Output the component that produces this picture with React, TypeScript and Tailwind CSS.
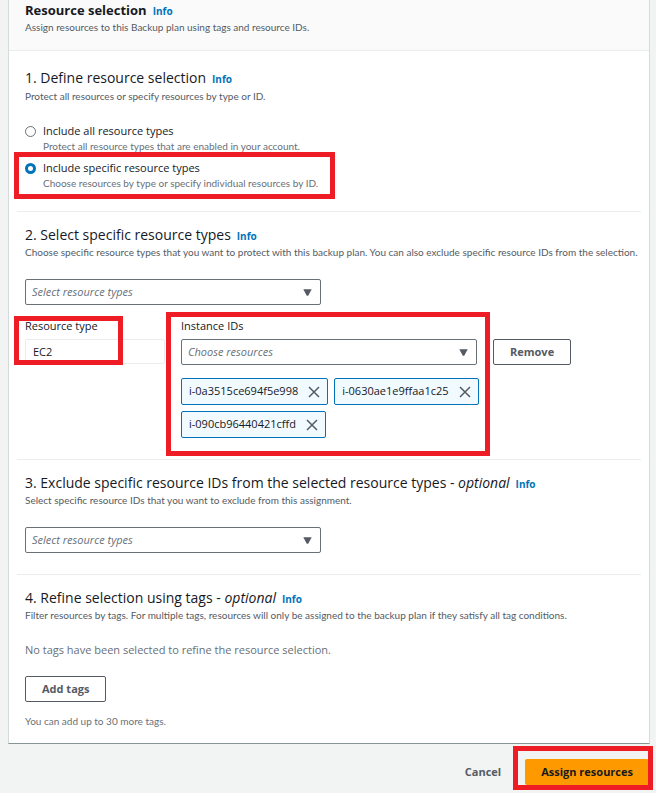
import { useState, type ReactNode } from "react";

function Info() {
  return (
    <a href="#info" className="ml-1.5 text-[10px] leading-none font-bold text-[#0073bb]">
      Info
    </a>
  );
}

function Highlight({ className }: { className: string }) {
  return <div aria-hidden="true" className={`pointer-events-none absolute z-10 border-5 border-[#ee1c24] ${className}`} />;
}

function SectionHeading({ children, optional }: { children: ReactNode; optional?: boolean }) {
  return (
    <h3 className="text-[14px] leading-5 whitespace-nowrap text-[#16191f]">
      {children}
      {optional && (
        <>
          {" - "}
          <em>optional</em>
        </>
      )}
      <Info />
    </h3>
  );
}

function Small({ children, className = "" }: { children: ReactNode; className?: string }) {
  return <p className={`font-['Lato','Open_Sans',sans-serif] text-[10px] leading-[14px] ${className}`}>{children}</p>;
}

function Dropdown({ id, label, placeholder }: { id: string; label?: string; placeholder: string }) {
  return (
    <div className="relative w-[296px]">
      <select
        id={id}
        aria-label={label}
        className="block h-[26px] w-full appearance-none rounded-xs border border-[#687078] bg-white pr-6 pl-1.5 text-[11px] text-[#687078] italic"
      >
        <option>{placeholder}</option>
      </select>
      <svg viewBox="0 0 9 7" className="pointer-events-none absolute top-[10px] right-[9px] h-[7px] w-[9px]" fill="#545b64">
        <path d="M0.3 0.3h8.4L5.2 6.7h-1.4z" />
      </svg>
    </div>
  );
}

function OutlineButton({ children }: { children: ReactNode }) {
  return (
    <button type="button" className="h-[26px] rounded-xs border border-[#545b64] bg-white px-4 text-[11px] font-bold text-[#545b64]">
      {children}
    </button>
  );
}

function Choice({ title, hint, checked, onChange }: { title: string; hint: string; checked: boolean; onChange: () => void }) {
  return (
    <label className="flex gap-[7px]">
      <input
        type="radio"
        name="selection"
        checked={checked}
        onChange={onChange}
        className="mt-[3px] size-[11px] shrink-0 appearance-none rounded-full border border-[#687078] bg-white checked:border-[3px] checked:border-[#0073bb]"
      />
      <span>
        <span className="block text-[11px] leading-4 text-[#16191f]">{title}</span>
        <span className="block font-['Lato','Open_Sans',sans-serif] text-[10px] leading-[14px] text-[#687078]">{hint}</span>
      </span>
    </label>
  );
}

function Token({ id, onRemove }: { id: string; onRemove: () => void }) {
  return (
    <li className="flex h-[27px] items-center gap-2.5 rounded-xs border border-[#0073bb] bg-[#f1faff] px-[7px] text-[11px] text-[#16191f]">
      {id}
      <button type="button" aria-label={`Remove ${id}`} onClick={onRemove}>
        <svg viewBox="0 0 12 12" className="size-3" fill="none" stroke="#545b64" strokeWidth="1.5">
          <path d="M1 1l10 10M11 1L1 11" />
        </svg>
      </button>
    </li>
  );
}

export default function App() {
  const [mode, setMode] = useState("specific");
  const [ids, setIds] = useState(["i-0a3515ce694f5e998", "i-0630ae1e9ffaa1c25", "i-090cb96440421cffd"]);

  return (
    <main className="min-h-screen bg-[#f2f3f3] pr-1.5 pb-2 pl-2 font-['Open_Sans','Noto_Sans',sans-serif] text-[#545b64]">
      <section className="border-x border-b border-[#d5dbdb] border-b-[#879596] bg-white">
        <header className="border-b border-[#eaeded] bg-[#fafafa] px-4 pb-4">
          <h2 className="text-[13px] leading-5 font-bold text-[#16191f]">
            Resource selection
            <Info />
          </h2>
          <Small>Assign resources to this Backup plan using tags and resource IDs.</Small>
        </header>

        <div className="px-2">
          <div className="border-b border-[#eaeded] pt-[17px] pb-[21px] pl-2">
            <SectionHeading>1. Define resource selection</SectionHeading>
            <Small className="mt-px">Protect all resources or specify resources by type or ID.</Small>
            <div className="mt-5 flex flex-col items-start gap-[7px]">
              <Choice
                title="Include all resource types"
                hint="Protect all resource types that are enabled in your account."
                checked={mode === "all"}
                onChange={() => setMode("all")}
              />
              <div className="relative">
                <Choice
                  title="Include specific resource types"
                  hint="Choose resources by type or specify individual resources by ID."
                  checked={mode === "specific"}
                  onChange={() => setMode("specific")}
                />
                <Highlight className="-top-2 -bottom-[9px] -left-[11px] w-[321px]" />
              </div>
            </div>
          </div>

          <div className="border-b border-[#eaeded] pt-[13px] pb-[21px] pl-2">
            <SectionHeading>2. Select specific resource types</SectionHeading>
            <Small>
              Choose specific resource types that you want to protect with this backup plan. You can also exclude specific resource IDs from the
              selection.
            </Small>
            <div className="mt-5">
              <Dropdown id="types" label="Resource types" placeholder="Select resource types" />
            </div>
            <div className="mt-[13px] flex items-start gap-4">
              <div className="relative w-[140px]">
                <label htmlFor="type" className="block text-[11px] leading-4 text-[#16191f]">
                  Resource type
                </label>
                <input
                  id="type"
                  readOnly
                  value="EC2"
                  className="mt-[5px] block h-[25px] w-full rounded-xs border border-[#eaeded] bg-white px-[7px] text-[11px] text-[#16191f]"
                />
                <Highlight className="-top-0.5 -bottom-px -left-[11px] w-[109px]" />
              </div>
              <div className="relative w-[296px]">
                <label htmlFor="instances" className="mb-[5px] block text-[11px] leading-4 text-[#16191f]">
                  Instance IDs
                </label>
                <Dropdown id="instances" placeholder="Choose resources" />
                <ul className="mt-[13px] flex w-[304px] flex-wrap gap-1.5">
                  {ids.map((id) => (
                    <Token key={id} id={id} onRemove={() => setIds(ids.filter((other) => other !== id))} />
                  ))}
                </ul>
                <Highlight className="-top-1.5 -right-[13px] -bottom-[18px] -left-[15px]" />
              </div>
              <div className="flex pt-[21px]">
                <OutlineButton>Remove</OutlineButton>
              </div>
            </div>
          </div>

          <div className="border-b border-[#eaeded] pt-[13px] pb-[21px] pl-2">
            <SectionHeading optional>3. Exclude specific resource IDs from the selected resource types</SectionHeading>
            <Small>Select specific resource IDs that you want to exclude from this assignment.</Small>
            <div className="mt-5">
              <Dropdown id="exclude" label="Resource types to exclude" placeholder="Select resource types" />
            </div>
          </div>

          <div className="flex flex-col items-start pt-[13px] pb-[15px] pl-2">
            <SectionHeading optional>4. Refine selection using tags</SectionHeading>
            <Small>
              Filter resources by tags. For multiple tags, resources will only be assigned to the backup plan if they satisfy all tag conditions.
            </Small>
            <p className="mt-5 mb-[18px] text-[11px] leading-4 text-[#687078]">No tags have been selected to refine the resource selection.</p>
            <OutlineButton>Add tags</OutlineButton>
            <Small className="mt-3 text-[#687078]">You can add up to 30 more tags.</Small>
          </div>
        </div>
      </section>

      <footer className="flex items-center justify-end gap-6 pt-[15px] pr-px">
        <button type="button" className="text-[11px] font-bold text-[#545b64]">
          Cancel
        </button>
        <div className="relative">
          <button type="button" className="block h-[26px] rounded-xs bg-[#ff9900] px-4 text-[11px] font-bold text-[#16191f]">
            Assign resources
          </button>
          <Highlight className="-top-[13px] -right-1 -bottom-[5px] -left-3" />
        </div>
      </footer>
    </main>
  );
}
